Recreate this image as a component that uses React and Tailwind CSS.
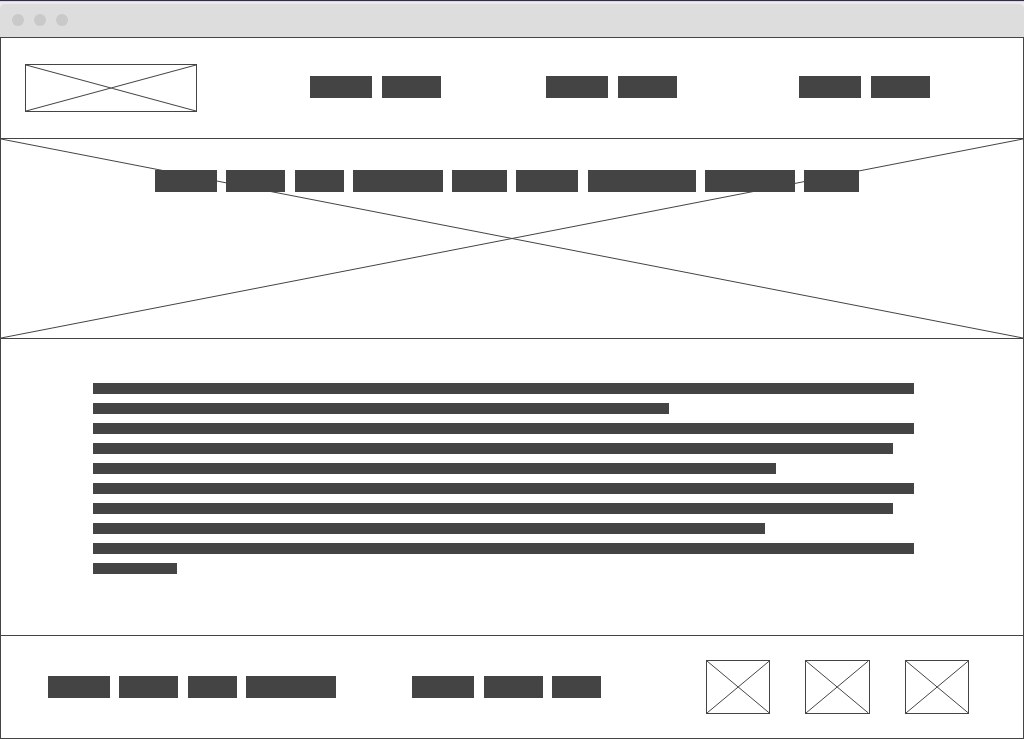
function Cross() {
  return (
    <svg
      className="absolute inset-0 h-full w-full"
      viewBox="0 0 100 100"
      preserveAspectRatio="none"
      stroke="#444444"
      aria-hidden="true"
    >
      <path d="M0 0 L100 100 M100 0 L0 100" fill="none" vectorEffect="non-scaling-stroke" />
    </svg>
  );
}

function Words({ widths, className }) {
  return (
    <span className={`flex justify-between ${className}`}>
      {widths.map((width, i) => (
        <span key={i} className="h-[22px] bg-[#444444]" style={{ width }} />
      ))}
    </span>
  );
}

const lines = [821, 576, 821, 800, 683, 821, 800, 672, 821, 84];

export default function App() {
  return (
    <div className="flex min-h-screen flex-col bg-[#efe8f0]">
      <div className="h-0.5 border-t border-[#2f2e45] bg-[#dcd5e8]" />
      <div className="mt-0.5 flex h-[33px] items-start gap-[10px] rounded-t-[5px] bg-[#dddddd] px-3 pt-[10px]">
        <span className="size-3 rounded-full bg-[#c9c9c9]" />
        <span className="size-3 rounded-full bg-[#c9c9c9]" />
        <span className="size-3 rounded-full bg-[#c9c9c9]" />
      </div>

      <div className="flex grow flex-col border border-[#444444] bg-white">
        <header className="grid grid-cols-[285fr_236fr_253fr_200fr] border-b border-[#444444] px-6 py-[26px]">
          <a href="#home" aria-label="Home" className="relative block h-12 w-[172px] border border-[#444444]">
            <Cross />
          </a>
          <nav aria-label="Main" className="col-span-3 grid grid-cols-subgrid pt-3">
            <a href="#one" aria-label="First section">
              <Words widths={[62, 59]} className="w-[131px]" />
            </a>
            <a href="#two" aria-label="Second section">
              <Words widths={[62, 59]} className="w-[131px]" />
            </a>
            <a href="#three" aria-label="Third section">
              <Words widths={[62, 59]} className="w-[131px]" />
            </a>
          </nav>
        </header>

        <main className="flex grow flex-col">
          <section className="relative flex h-[200px] justify-center border-b border-[#444444] pt-[31px] pr-[10px]">
            <Cross />
            <h1 className="relative">
              <Words widths={[62, 59, 49, 90, 55, 62, 108, 90, 55]} className="w-[704px]" />
            </h1>
          </section>

          <section className="flex grow flex-col gap-[9px] pt-11 pr-[109px] pb-[61px] pl-[92px]">
            {lines.map((width, i) => (
              <div
                key={i}
                className="h-[11px] bg-[#444444]"
                style={{ width: `${(width / 821) * 100}%` }}
              />
            ))}
          </section>
        </main>

        <footer className="grid grid-cols-[364fr_294fr_263fr] items-center border-t border-[#444444] py-6 pr-[54px] pl-[47px]">
          <Words widths={[62, 59, 49, 90]} className="w-[288px]" />
          <Words widths={[62, 59, 49]} className="w-[189px]" />
          <div className="grid grid-cols-3 gap-[35px]">
            <a href="#a" aria-label="First profile" className="relative block h-[54px] border border-[#444444]">
              <Cross />
            </a>
            <a href="#b" aria-label="Second profile" className="relative block h-[54px] border border-[#444444]">
              <Cross />
            </a>
            <a href="#c" aria-label="Third profile" className="relative block h-[54px] border border-[#444444]">
              <Cross />
            </a>
          </div>
        </footer>
      </div>
    </div>
  );
}
